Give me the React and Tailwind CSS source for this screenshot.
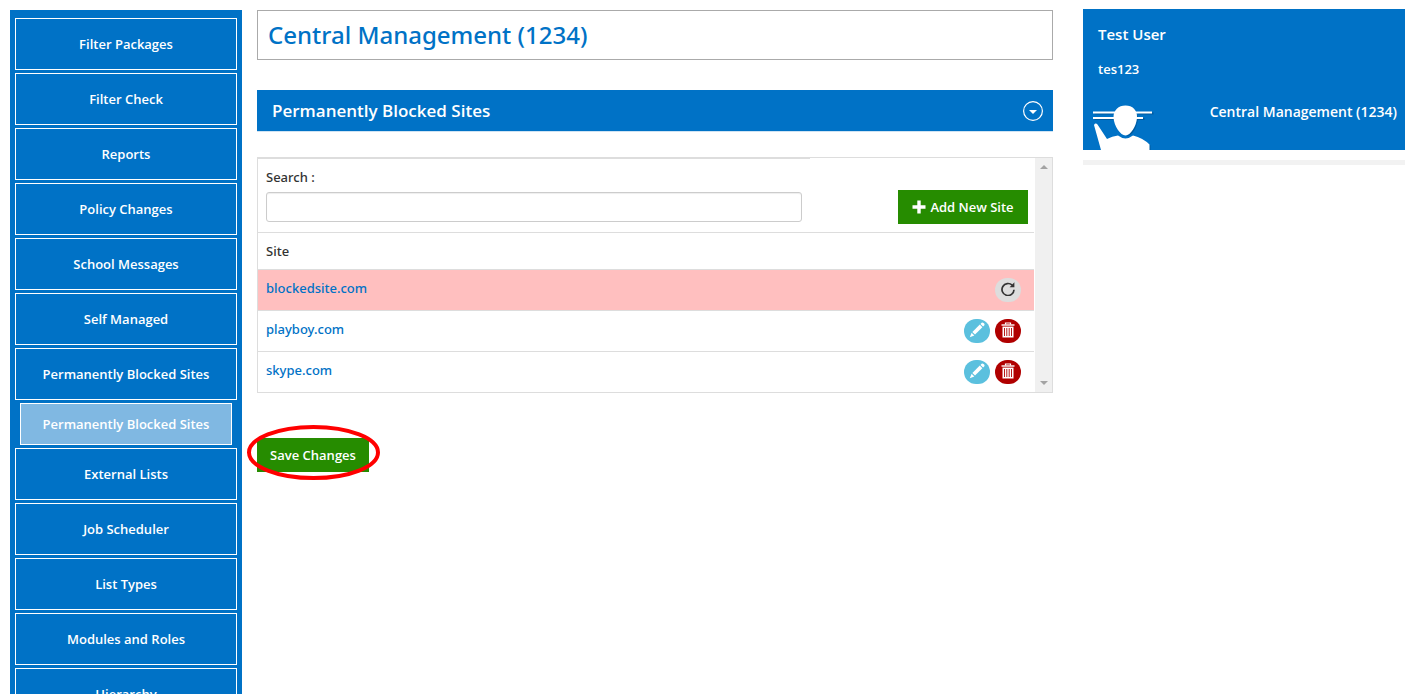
import React from "react";

const menuTop = ["Filter Packages", "Filter Check", "Reports", "Policy Changes", "School Messages", "Self Managed", "Permanently Blocked Sites"];
const menuBottom = ["External Lists", "Job Scheduler", "List Types", "Modules and Roles", "Hierarchy"];
const sites = [
  { name: "blockedsite.com", removed: true },
  { name: "playboy.com", removed: false },
  { name: "skype.com", removed: false },
];

function MenuItem({ label }) {
  return (
    <li>
      <a href="#" className="flex h-[52px] items-center justify-center border border-white">{label}</a>
    </li>
  );
}

function RefreshIcon() {
  return (
    <svg viewBox="0 0 14 14" className="size-3.5" aria-hidden="true">
      <path d="M11.200 3.200A6 6 0 1 0 13 7.700" fill="none" stroke="#333" strokeWidth="1.700" />
      <path d="M13.400 0.300V5.200H8.600Z" fill="#333" />
    </svg>
  );
}

function PencilIcon() {
  return (
    <svg viewBox="0 0 16 16" className="size-4" fill="#fff" aria-hidden="true">
      <path d="M12.600 0.800q1-.8 1.900.1l.7.7q.8.9 0 1.800l-1.100 1.100L11.500 1.900Z" />
      <path d="M10.800 2.600 13.400 5.200 6 12.600 3.400 10Z" />
      <path d="M2.600 10.700 5.300 13.400 0.800 15.200Z" />
    </svg>
  );
}

function TrashIcon() {
  return (
    <svg viewBox="0 0 14 16" className="h-4 w-3.5" aria-hidden="true">
      <path d="M4.500 2.500V1H9.500V2.500" fill="none" stroke="#fff" strokeWidth="1.200" />
      <path d="M0.500 2.300H13.500V3.700H0.500Z" fill="#fff" />
      <path d="M1.500 4.600H12.500V15.500H1.500Z" fill="#fff" />
      <path d="M3.500 6V14M5.800 6V14M8.200 6V14M10.500 6V14" stroke="#b00000" strokeWidth="0.900" />
    </svg>
  );
}

function SiteRow({ site }) {
  return (
    <tr className={site.removed ? "bg-[#ffbfbf]" : "bg-white"}>
      <td className="h-[41px] border-t border-[#ddd] px-2 pb-1">
        <a href="#" className="text-[#0072c6]">{site.name}</a>
      </td>
      <td className="h-[41px] border-t border-[#ddd] pr-[13px]">
        <div className="flex justify-end gap-[5px]">
          {site.removed ? (
            <button aria-label="Restore" className="flex h-6 w-[26px] items-center justify-center rounded-full bg-[#ddd] pb-0.5"><RefreshIcon /></button>
          ) : (
            <>
              <button aria-label="Edit" className="flex h-6 w-[26px] items-center justify-center rounded-full bg-[#5bc0de] pb-0.5"><PencilIcon /></button>
              <button aria-label="Delete" className="flex h-6 w-[26px] items-center justify-center rounded-full bg-[#b00000] pb-0.5"><TrashIcon /></button>
            </>
          )}
        </div>
      </td>
    </tr>
  );
}

export default function App() {
  return (
    <div className="flex h-screen items-start overflow-hidden bg-white pr-3.5 pl-2.5 font-['Noto_Sans','Open_Sans',sans-serif] text-[13px] leading-5 font-medium text-[#333]">
      <nav className="mt-2.5 w-[232px] shrink-0 bg-[#0072c6] px-[5px] pt-2 pb-2 font-['Open_Sans',sans-serif] font-semibold text-white">
        <ul className="flex flex-col gap-[3px]">
          {menuTop.map((label) => <MenuItem key={label} label={label} />)}
          <li className="px-[5px]">
            <a href="#" className="flex h-[42px] items-center justify-center border border-white bg-[#80b8e2]">Permanently Blocked Sites</a>
          </li>
          {menuBottom.map((label) => <MenuItem key={label} label={label} />)}
        </ul>
      </nav>

      <main className="mt-2.5 ml-[15px] min-w-0 flex-1">
        <h1 className="flex h-[50px] items-center border border-[#aaa] px-2.5 text-2xl text-[#0072c6]">Central Management (1234)</h1>

        <header className="mt-[30px] flex h-[42px] items-center justify-between border-b border-[#cfe3f3] bg-[#0072c6] pr-2.5 pl-[15px] text-white">
          <h2 className="font-['Open_Sans',sans-serif] text-[17px] font-semibold">Permanently Blocked Sites</h2>
          <button aria-label="Collapse section">
            <svg viewBox="0 0 20 20" className="size-5" aria-hidden="true">
              <circle cx="10" cy="10" r="9.400" fill="none" stroke="#fff" strokeWidth="1.200" />
              <path d="M6 9H14L10 13Z" fill="#fff" />
            </svg>
          </button>
        </header>

        <section className="mt-[25px] flex border border-[#ddd]">
          <div className="mr-px min-w-0 flex-1">
            <div className="grid h-[74px] grid-cols-[32fr_13fr] items-start">
              <div className="border-t border-[#ddd] px-2 pt-2">
                <label htmlFor="search" className="block">Search :</label>
                <input id="search" type="text" className="mt-[5px] block h-[30px] w-full rounded-[3px] border border-[#ccc] px-2 shadow-[inset_0_1px_1px_#eee] outline-none" />
              </div>
              <button className="mt-8 mr-1.5 flex h-[34px] w-[130px] items-center justify-center gap-1 justify-self-end bg-[#268c00] font-['Open_Sans',sans-serif] font-semibold text-white">
                <svg viewBox="0 0 14 14" className="size-3.5" aria-hidden="true"><path d="M5.300 0.500H8.700V5.300H13.500V8.700H8.700V13.500H5.300V8.700H0.500V5.300H5.300Z" fill="#fff" /></svg>
                Add New Site
              </button>
            </div>
            <table className="w-full border-separate border-spacing-0 text-left">
              <thead>
                <tr>
                  <th colSpan={2} className="h-[37px] border-t border-[#ddd] px-2 font-medium">Site</th>
                </tr>
              </thead>
              <tbody>
                {sites.map((site) => <SiteRow key={site.name} site={site} />)}
              </tbody>
            </table>
          </div>
          <div className="flex w-[17px] shrink-0 flex-col items-center justify-between bg-[#f0f0f0] py-[7px]" aria-hidden="true">
            <svg viewBox="0 0 8 4" className="h-1 w-2"><path d="M0 4 4 0 8 4Z" fill="#a3a3a3" /></svg>
            <svg viewBox="0 0 8 4" className="h-1 w-2"><path d="M0 0 4 4 8 0Z" fill="#a3a3a3" /></svg>
          </div>
        </section>

        <div className="relative mt-[45px] w-28">
          <button className="h-[34px] w-full bg-[#268c00] font-['Open_Sans',sans-serif] font-semibold text-white">Save Changes</button>
          <svg viewBox="0 0 133 55" className="pointer-events-none absolute -top-[13px] -left-2.5 h-[55px] w-[133px] max-w-none" aria-hidden="true">
            <ellipse cx="66.500" cy="27.500" rx="64.500" ry="25.500" fill="none" stroke="#f00" strokeWidth="4" />
          </svg>
        </div>
      </main>

      <aside className="mt-[9px] ml-[30px] w-[322px] shrink-0">
        <div className="flex h-[141px] flex-col bg-[#0072c6] font-['Open_Sans',sans-serif] font-semibold text-white">
          <p className="px-[15px] pt-[15px] text-[15px]">Test User</p>
          <p className="px-[15px] pt-[15px] text-[13px]">tes123</p>
          <div className="flex flex-1 items-end justify-between pr-2 pl-2.5">
            <svg viewBox="0 0 62 46" className="h-[46px] w-[62px]" aria-hidden="true">
              <g fill="#005a9e" transform="translate(1.500 1.500)">
                <path d="M0 7H59V9H0ZM0 12.500H50V14.500H0Z" />
                <path d="M32 1C39 1 44 6 43.500 13 43 22 37 31 32 31Z" />
                <path d="M38 32Q49 34 56 40V46H38Z" />
              </g>
              <path d="M20 8H45L43 21 33 33 22 21Z" fill="#0072c6" />
              <g fill="#fff">
                <path d="M0 7.500H59V9.500H0ZM0 13H50V15H0Z" />
                <path d="M32.500 1.500C39.500 1.500 44.500 6 44 13.500 43.500 22 37.500 31.500 32.500 31.500S21 22 20.500 13.500C20.500 6 25.500 1.500 32.500 1.500Z" />
                <path d="M1 21Q2.500 18.500 4.500 20.500L14 35Q19 32 25 31.500 29 34.500 32.500 34.500 36 34.500 40 31.500 50 34 56.500 40.500V46H8Z" />
              </g>
            </svg>
            <p className="mb-7 text-sm">Central Management (1234)</p>
          </div>
        </div>
        <div className="mt-2.5 h-[5px] bg-[#f2f2f2]" />
      </aside>
    </div>
  );
}
